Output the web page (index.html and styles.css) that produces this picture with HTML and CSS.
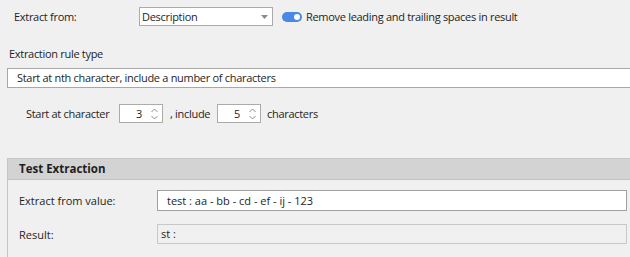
FILE: index.html
```html
<!DOCTYPE html>
<html>
<head>
<meta charset="utf-8">
<link rel="stylesheet" href="styles.css">
</head>
<body>
<div class="page">
  <div class="row1">
    <span class="lbl-from">Extract from:</span>
    <div class="combo">
      <span>Description</span>
      <svg class="caret" width="7" height="4" viewBox="0 0 7 4"><path d="M0 0h7L3.5 4z" fill="#8a8a8a"/></svg>
    </div>
    <span class="toggle"><span class="knob"></span></span>
    <span class="toggle-lbl">Remove leading and trailing spaces in result</span>
  </div>

  <div class="rule-lbl">Extraction rule type</div>
  <div class="rule-box">Start at nth character, include a number of characters</div>

  <div class="row3">
    <span class="start">Start at character</span>
    <div class="spin"><span class="val">3</span>
      <svg class="arrows" width="7" height="12" viewBox="0 0 7 12"><path d="M0.5 4L3.5 1L6.5 4M0.5 8L3.5 11L6.5 8" fill="none" stroke="#8c8c8c" stroke-width="1"/></svg>
    </div>
    <span class="inc">, include</span>
    <div class="spin"><span class="val">5</span>
      <svg class="arrows" width="7" height="12" viewBox="0 0 7 12"><path d="M0.5 4L3.5 1L6.5 4M0.5 8L3.5 11L6.5 8" fill="none" stroke="#8c8c8c" stroke-width="1"/></svg>
    </div>
    <span class="chars">characters</span>
  </div>

  <div class="group">
    <div class="group-head">Test Extraction</div>
    <div class="group-body">
      <div class="grow">
        <span class="glbl">Extract from value:</span>
        <div class="input">test : aa - bb - cd - ef - ij - 123</div>
      </div>
      <div class="grow r2">
        <span class="glbl">Result:</span>
        <div class="result">st :</div>
      </div>
    </div>
  </div>
</div>
</body>
</html>
```

FILE: styles.css
```css
html, body {
  margin: 0;
  padding: 0;
  background: #f0f0f0;
  overflow: hidden;
}
.page {
  width: 630px;
  height: 257px;
  font-family: "Open Sans", "Noto Sans", sans-serif;
  font-size: 11px;
  letter-spacing: -0.3px;
  color: #1e1e1e;
  overflow: hidden;
}
.row1 {
  display: flex;
  align-items: center;
  height: 19px;
  padding-top: 7px;
}
.lbl-from {
  margin-left: 14px;
  width: 125px;
}
.combo {
  box-sizing: border-box;
  width: 134px;
  height: 19px;
  background: #fff;
  border: 1px solid #ababab;
  display: flex;
  align-items: center;
  justify-content: space-between;
  padding: 0 4px 0 2px;
}
.toggle {
  position: relative;
  margin-left: 9px;
  width: 20px;
  height: 10px;
  border-radius: 5px;
  background: #4a88e6;
}
.knob {
  position: absolute;
  right: 2px;
  top: 2px;
  width: 6px;
  height: 6px;
  border-radius: 50%;
  background: #fff;
}
.toggle-lbl { margin-left: 4px; }

.rule-lbl {
  margin: 20px 0 0 9px;
  height: 16px;
  line-height: 16px;
}
.rule-box {
  box-sizing: border-box;
  margin: 6px -20px 0 7px;
  height: 20px;
  background: #fff;
  border: 1px solid #a8a8a8;
  padding-left: 9px;
  line-height: 18px;
}
.row3 {
  display: flex;
  align-items: center;
  margin: 16px 0 0 26px;
  height: 19px;
}
.start { width: 93px; }
.spin {
  box-sizing: border-box;
  width: 44px;
  height: 19px;
  background: #fff;
  border: 1px solid #ababab;
  display: flex;
  align-items: center;
  justify-content: flex-end;
  padding-right: 4px;
}
.spin .val { margin-right: 9px; }
.inc { margin-left: 7px; width: 47px; }
.chars { margin-left: 6px; }

.group {
  margin: 35px -20px 0 7px;
  border: 1px solid #c6c6c6;
  height: 200px;
  letter-spacing: 0;
}
.group-head {
  height: 20px;
  line-height: 20px;
  background: #d3d3d3;
  border-bottom: 1px solid #c2c2c2;
  padding-left: 11px;
  font-weight: bold;
  font-size: 11.5px;
}
.group-body {
  padding: 10px 0 0 11px;
}
.grow {
  display: flex;
  align-items: center;
}
.glbl { width: 138px; }
.input {
  box-sizing: border-box;
  width: 470px;
  height: 21px;
  background: #fff;
  border: 1px solid #a0a0a0;
  padding-left: 9px;
  line-height: 19px;
}
.r2 { margin-top: 13px; }
.result {
  box-sizing: border-box;
  width: 470px;
  height: 20px;
  border: 1px solid #c8c8c8;
  padding-left: 3px;
  line-height: 18px;
}
```
